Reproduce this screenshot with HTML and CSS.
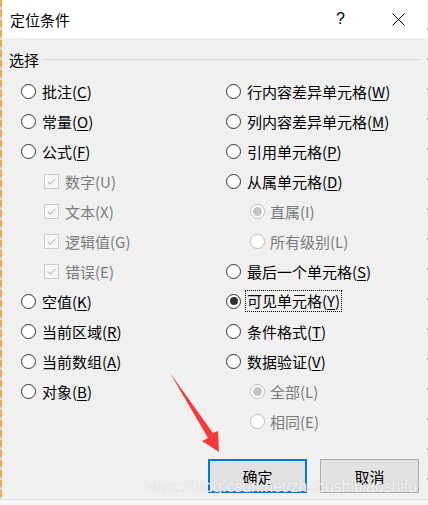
FILE: index.html
```html
<!DOCTYPE html>
<html lang="zh-CN">
<head>
    <meta charset="UTF-8">
    <title>定位条件</title>
    <link rel="stylesheet" href="styles.css">
</head>
<body>
    <div class="screen">
        <div class="edge-left"></div>

        <div class="dialog">
            <div class="titlebar">
                <span class="title">定位条件</span>
                <span class="help">?</span>
                <span class="close">
                    <svg viewBox="0 0 13 13" width="13" height="13"><path d="M0.5 0.5L12.5 12.5M12.5 0.5L0.5 12.5" stroke="#000" stroke-width="1"/></svg>
                </span>
            </div>

            <div class="content">
                <div class="group-head">
                    <span>选择</span>
                    <div class="group-line"></div>
                </div>

                <div class="options">
                    <div class="col col-left">
                        <div class="opt"><span class="radio"></span><span>批注(<u>C</u>)</span></div>
                        <div class="opt"><span class="radio"></span><span>常量(<u>O</u>)</span></div>
                        <div class="opt"><span class="radio"></span><span>公式(<u>F</u>)</span></div>
                        <div class="opt sub off"><span class="check"><svg viewBox="0 0 15 15"><path d="M3 7.5L6 10.5L12 4.5" fill="none" stroke="#c3c3c3" stroke-width="1.3"/></svg></span><span>数字(U)</span></div>
                        <div class="opt sub off"><span class="check"><svg viewBox="0 0 15 15"><path d="M3 7.5L6 10.5L12 4.5" fill="none" stroke="#c3c3c3" stroke-width="1.3"/></svg></span><span>文本(X)</span></div>
                        <div class="opt sub off"><span class="check"><svg viewBox="0 0 15 15"><path d="M3 7.5L6 10.5L12 4.5" fill="none" stroke="#c3c3c3" stroke-width="1.3"/></svg></span><span>逻辑值(G)</span></div>
                        <div class="opt sub off"><span class="check"><svg viewBox="0 0 15 15"><path d="M3 7.5L6 10.5L12 4.5" fill="none" stroke="#c3c3c3" stroke-width="1.3"/></svg></span><span>错误(E)</span></div>
                        <div class="opt"><span class="radio"></span><span>空值(<u>K</u>)</span></div>
                        <div class="opt"><span class="radio"></span><span>当前区域(<u>R</u>)</span></div>
                        <div class="opt"><span class="radio"></span><span>当前数组(<u>A</u>)</span></div>
                        <div class="opt"><span class="radio"></span><span>对象(<u>B</u>)</span></div>
                    </div>

                    <div class="col col-right">
                        <div class="opt"><span class="radio"></span><span>行内容差异单元格(<u>W</u>)</span></div>
                        <div class="opt"><span class="radio"></span><span>列内容差异单元格(<u>M</u>)</span></div>
                        <div class="opt"><span class="radio"></span><span>引用单元格(<u>P</u>)</span></div>
                        <div class="opt"><span class="radio"></span><span>从属单元格(<u>D</u>)</span></div>
                        <div class="opt sub off"><span class="radio dot"></span><span>直属(I)</span></div>
                        <div class="opt sub off"><span class="radio"></span><span>所有级别(L)</span></div>
                        <div class="opt"><span class="radio"></span><span>最后一个单元格(<u>S</u>)</span></div>
                        <div class="opt"><span class="radio dot"></span><span class="focus">可见单元格(<u>Y</u>)</span></div>
                        <div class="opt"><span class="radio"></span><span>条件格式(<u>T</u>)</span></div>
                        <div class="opt"><span class="radio"></span><span>数据验证(<u>V</u>)</span></div>
                        <div class="opt sub off"><span class="radio dot"></span><span>全部(L)</span></div>
                        <div class="opt sub off"><span class="radio"></span><span>相同(E)</span></div>
                    </div>
                </div>

                <div class="buttons">
                    <button class="btn btn-default">确定</button>
                    <button class="btn">取消</button>
                </div>
            </div>
        </div>

        <div class="edge-right"></div>
    </div>
    <div class="bottom-strip"></div>

    <!-- annotation drawn over the screenshot -->
    <svg class="arrow" viewBox="0 0 428 505" width="428" height="505">
        <polygon points="170,373 213,433 218,431 219,452 202,441 208,438" fill="#f43b3b"/>
    </svg>
    <div class="watermark">https://blog.csdn.net/zhebushibiaoshifu</div>
</body>
</html>
```

FILE: styles.css
```css
body {
    margin: 0;
    width: 428px;
    height: 505px;
    overflow: hidden;
    background: #f3f3f3;
    font-family: "Noto Sans CJK SC", "Noto Sans", sans-serif;
    color: #000;
    position: relative;
}

.screen {
    display: flex;
    height: 499px;
}

.edge-left {
    width: 2px;
    background: repeating-linear-gradient(180deg, #f5a94a 0, #f5a94a 7px, #d8d8d8 7px, #d8d8d8 10px);
}

.edge-right {
    width: 1px;
    background: repeating-linear-gradient(180deg, #f0f0f0 0, #f0f0f0 28px, #b9b9b9 28px, #b9b9b9 30px);
}

.dialog {
    flex: 1;
    display: flex;
    flex-direction: column;
    background: #f0f0f0;
}

.titlebar {
    height: 38px;
    background: #fff;
    display: flex;
    align-items: center;
    padding-left: 8px;
    font-size: 15px;
}

.help {
    margin-left: auto;
    margin-right: 47px;
    font-family: "Liberation Sans", sans-serif;
    font-size: 16px;
}

.close {
    display: flex;
    margin-right: 22px;
}

.content {
    flex: 1;
    display: flex;
    flex-direction: column;
}

.group-head {
    display: flex;
    align-items: center;
    height: 34px;
    margin-top: 4px;
    padding-left: 7px;
    padding-right: 6px;
    gap: 5px;
    font-size: 15px;
}

.group-line {
    flex: 1;
    height: 1px;
    background: #d6d6d6;
}

.options {
    display: grid;
    grid-template-columns: 205px 1fr;
    padding-left: 19px;
}

.col {
    display: flex;
    flex-direction: column;
}

.opt {
    height: 30px;
    display: flex;
    align-items: center;
    gap: 6px;
    font-size: 15px;
    white-space: nowrap;
}

.opt u {
    text-underline-offset: 2px;
}

.col-left .sub {
    padding-left: 23px;
}

.col-right .sub {
    padding-left: 24px;
    gap: 5px;
}

.off {
    color: #7b7b7b;
}

.radio {
    width: 15px;
    height: 15px;
    box-sizing: border-box;
    border: 1px solid #333;
    border-radius: 50%;
    background: #fff;
    display: flex;
    align-items: center;
    justify-content: center;
    flex-shrink: 0;
}

.radio.dot::after {
    content: '';
    width: 8px;
    height: 8px;
    border-radius: 50%;
    background: #333;
}

.off .radio {
    border-color: #bcbcbc;
}

.off .radio.dot::after {
    width: 9px;
    height: 9px;
    background: #c4c4c4;
}

.check {
    width: 15px;
    height: 15px;
    box-sizing: border-box;
    border: 1px solid #cccccc;
    background: #f7f7f7;
    display: flex;
    flex-shrink: 0;
}

.check svg {
    width: 13px;
    height: 13px;
}

.focus {
    border: 1px dotted #000;
    padding: 0 1px;
    margin-left: -2px;
    line-height: 20px;
}

.buttons {
    display: flex;
    justify-content: flex-end;
    gap: 13px;
    margin-top: auto;
    padding-right: 8px;
    padding-bottom: 6px;
}

.btn {
    width: 99px;
    height: 34px;
    box-sizing: border-box;
    background: #e1e1e1;
    border: 1px solid #adadad;
    font-family: "Noto Sans CJK SC", sans-serif;
    font-size: 15px;
    color: #000;
    padding: 0;
}

.btn-default {
    border: 2px solid #0078d7;
}

.bottom-strip {
    height: 6px;
    background: #f6f6f6;
    border-top: 1px solid #e2e2e2;
}

.arrow {
    position: absolute;
    left: 0;
    top: 0;
    pointer-events: none;
}

.watermark {
    position: absolute;
    left: 145px;
    top: 478px;
    font-family: "Liberation Sans", sans-serif;
    font-size: 16px;
    letter-spacing: -0.1px;
    color: rgba(255, 255, 255, 0.85);
    text-shadow: 0 0 1px rgba(160, 160, 160, 0.7);
    white-space: nowrap;
}
```
